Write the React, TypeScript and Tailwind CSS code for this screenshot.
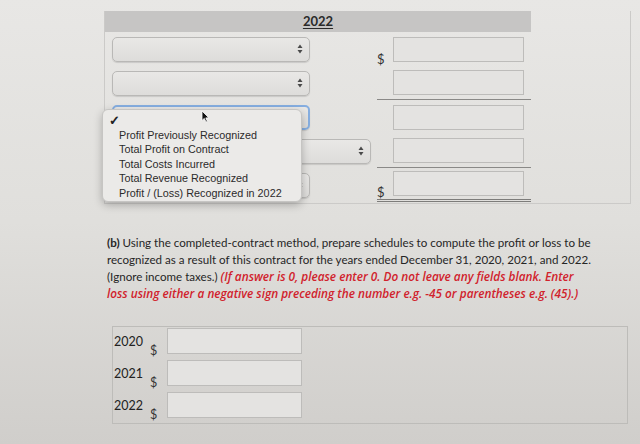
import React from 'react';

const lato = { fontFamily: 'Lato, "Open Sans", sans-serif' };

// little up/down arrows used on the native-looking select boxes
const Arrows = () => (
  <svg width="6" height="10" viewBox="0 0 6 10" className="shrink-0">
    <path d="M3 0.5 L5.5 4 L0.5 4 Z" fill="#4a4a4a" />
    <path d="M3 9.5 L5.5 6 L0.5 6 Z" fill="#4a4a4a" />
  </svg>
);

const SelectBox = ({ width = 'w-[198px]', focused = false, indent = 'ml-[7px]' }: { width?: string; focused?: boolean; indent?: string }) => (
  <div
    className={`${indent} ${width} h-[25px] rounded-[5px] flex items-center justify-end pr-[6px] bg-gradient-to-b from-[#e9e8e6] to-[#dddcda] ${
      focused ? 'border-2 border-[#86aee0]' : 'border border-[#b9b8b6]'
    } shadow-[0_1px_1px_rgba(0,0,0,0.12)]`}
  >
    <Arrows />
  </div>
);

const Field = ({ w = 'w-[131px]' }: { w?: string }) => (
  <div className={`${w} h-[25px] border border-[#bdbcba] bg-[#e4e3e1]`} />
);

type Row = { indent?: string; width?: string; focused?: boolean; dollar?: boolean; line?: 'single' | 'double' };

const rows: Row[] = [
  { dollar: true },
  { line: 'single' },
  { focused: true },
  { indent: 'ml-[67px]', width: 'w-[199px]', line: 'single' },
  { dollar: true, line: 'double' },
];

const Pointer = () => (
  <svg width="9" height="13" viewBox="0 0 9 13" className="absolute left-[201px] top-[110px]">
    <path d="M1 1 L1 10.5 L3.3 8.4 L5 12 L6.4 11.4 L4.8 7.9 L7.8 7.8 Z" fill="#111" stroke="#fff" strokeWidth="0.8" />
  </svg>
);

export default function App() {
  const options = [
    'Profit Previously Recognized',
    'Total Profit on Contract',
    'Total Costs Incurred',
    'Total Revenue Recognized',
    'Profit / (Loss) Recognized in 2022',
  ];

  return (
    <div className="w-[640px] h-[444px] overflow-hidden bg-gradient-to-b from-[#e8e7e5] via-[#e0dfdc] to-[#d0cecb] text-[#222]" style={lato}>
      <div className="relative pl-[104px] pt-[11px]">
        <div className="w-[527px] h-[193px] border border-[#cbcac8] border-t-0">
          <div className="w-[426px]">
            <div className="h-[21px] bg-[#c6c5c4] flex items-center justify-center">
              <span className="text-[13px] font-bold underline underline-offset-2 text-[#2a2a2a]">2022</span>
            </div>
            {rows.map((r, i) => (
              <div key={i} className="h-[34px] flex items-center">
                <div className="w-[272px] flex items-center">
                  <SelectBox width={r.width} indent={r.indent} focused={r.focused} />
                </div>
                <div
                  className={`w-[154px] h-full flex items-center ${
                    r.line === 'single' ? 'border-b border-[#8a8987]' : r.line === 'double' ? 'border-b-[3px] border-double border-[#7d7c7a]' : ''
                  }`}
                >
                  <span className="w-[16px] text-[13px] leading-none self-end mb-[0px] text-[#333]">{r.dollar ? '$' : ''}</span>
                  <Field />
                </div>
              </div>
            ))}
          </div>
        </div>

        {/* open dropdown menu of the third select */}
        <div className="absolute left-[102px] top-[109px] w-[200px] h-[93px] rounded-[6px] bg-[#ebeae8] border border-[#c6c5c3] shadow-[0_3px_8px_rgba(0,0,0,0.25)] pt-[3px]" style={{ fontFamily: '"Liberation Sans", Arial, sans-serif' }}>
          <div className="pl-[6px] h-[15px] text-[13px] leading-[15px] font-bold text-[#222]">✓</div>
          {options.map((o) => (
            <div key={o} className="pl-[16px] h-[14.4px] text-[10.8px] leading-[14.4px] text-[#2b2b2b] whitespace-nowrap">
              {o}
            </div>
          ))}
        </div>
        <Pointer />
      </div>

      <p className="ml-[107px] mt-[30px] text-[11.6px] leading-[17px] text-[#262626] whitespace-nowrap">
        <b>(b)</b> Using the completed-contract method, prepare schedules to compute the profit or loss to be
        <br />
        recognized as a result of this contract for the years ended December 31, 2020, 2021, and 2022.
        <br />
        (Ignore income taxes.){' '}
        <span className="text-[#d1222c] font-semibold italic text-[11.8px]" style={{ fontFamily: '"Open Sans", Lato, sans-serif' }}>
          (If answer is 0, please enter 0. Do not leave any fields blank. Enter
          <br />
          loss using either a negative sign preceding the number e.g. -45 or parentheses e.g. (45).)
        </span>
      </p>

      <div className="ml-[112px] mt-[24px] w-[516px] h-[98px] border border-[#bdbcb9] pt-[1px] flex flex-col gap-[6px]">
        {['2020', '2021', '2022'].map((y) => (
          <div key={y} className="h-[26px] flex items-center">
            <span className="w-[37px] pl-[1px] text-[12.5px] text-[#222] mt-[2px]">{y}</span>
            <span className="w-[17px] text-[12.5px] leading-none self-end mb-[-3px] text-[#333]">$</span>
            <Field w="w-[135px] h-[26px]" />
          </div>
        ))}
      </div>
    </div>
  );
}
